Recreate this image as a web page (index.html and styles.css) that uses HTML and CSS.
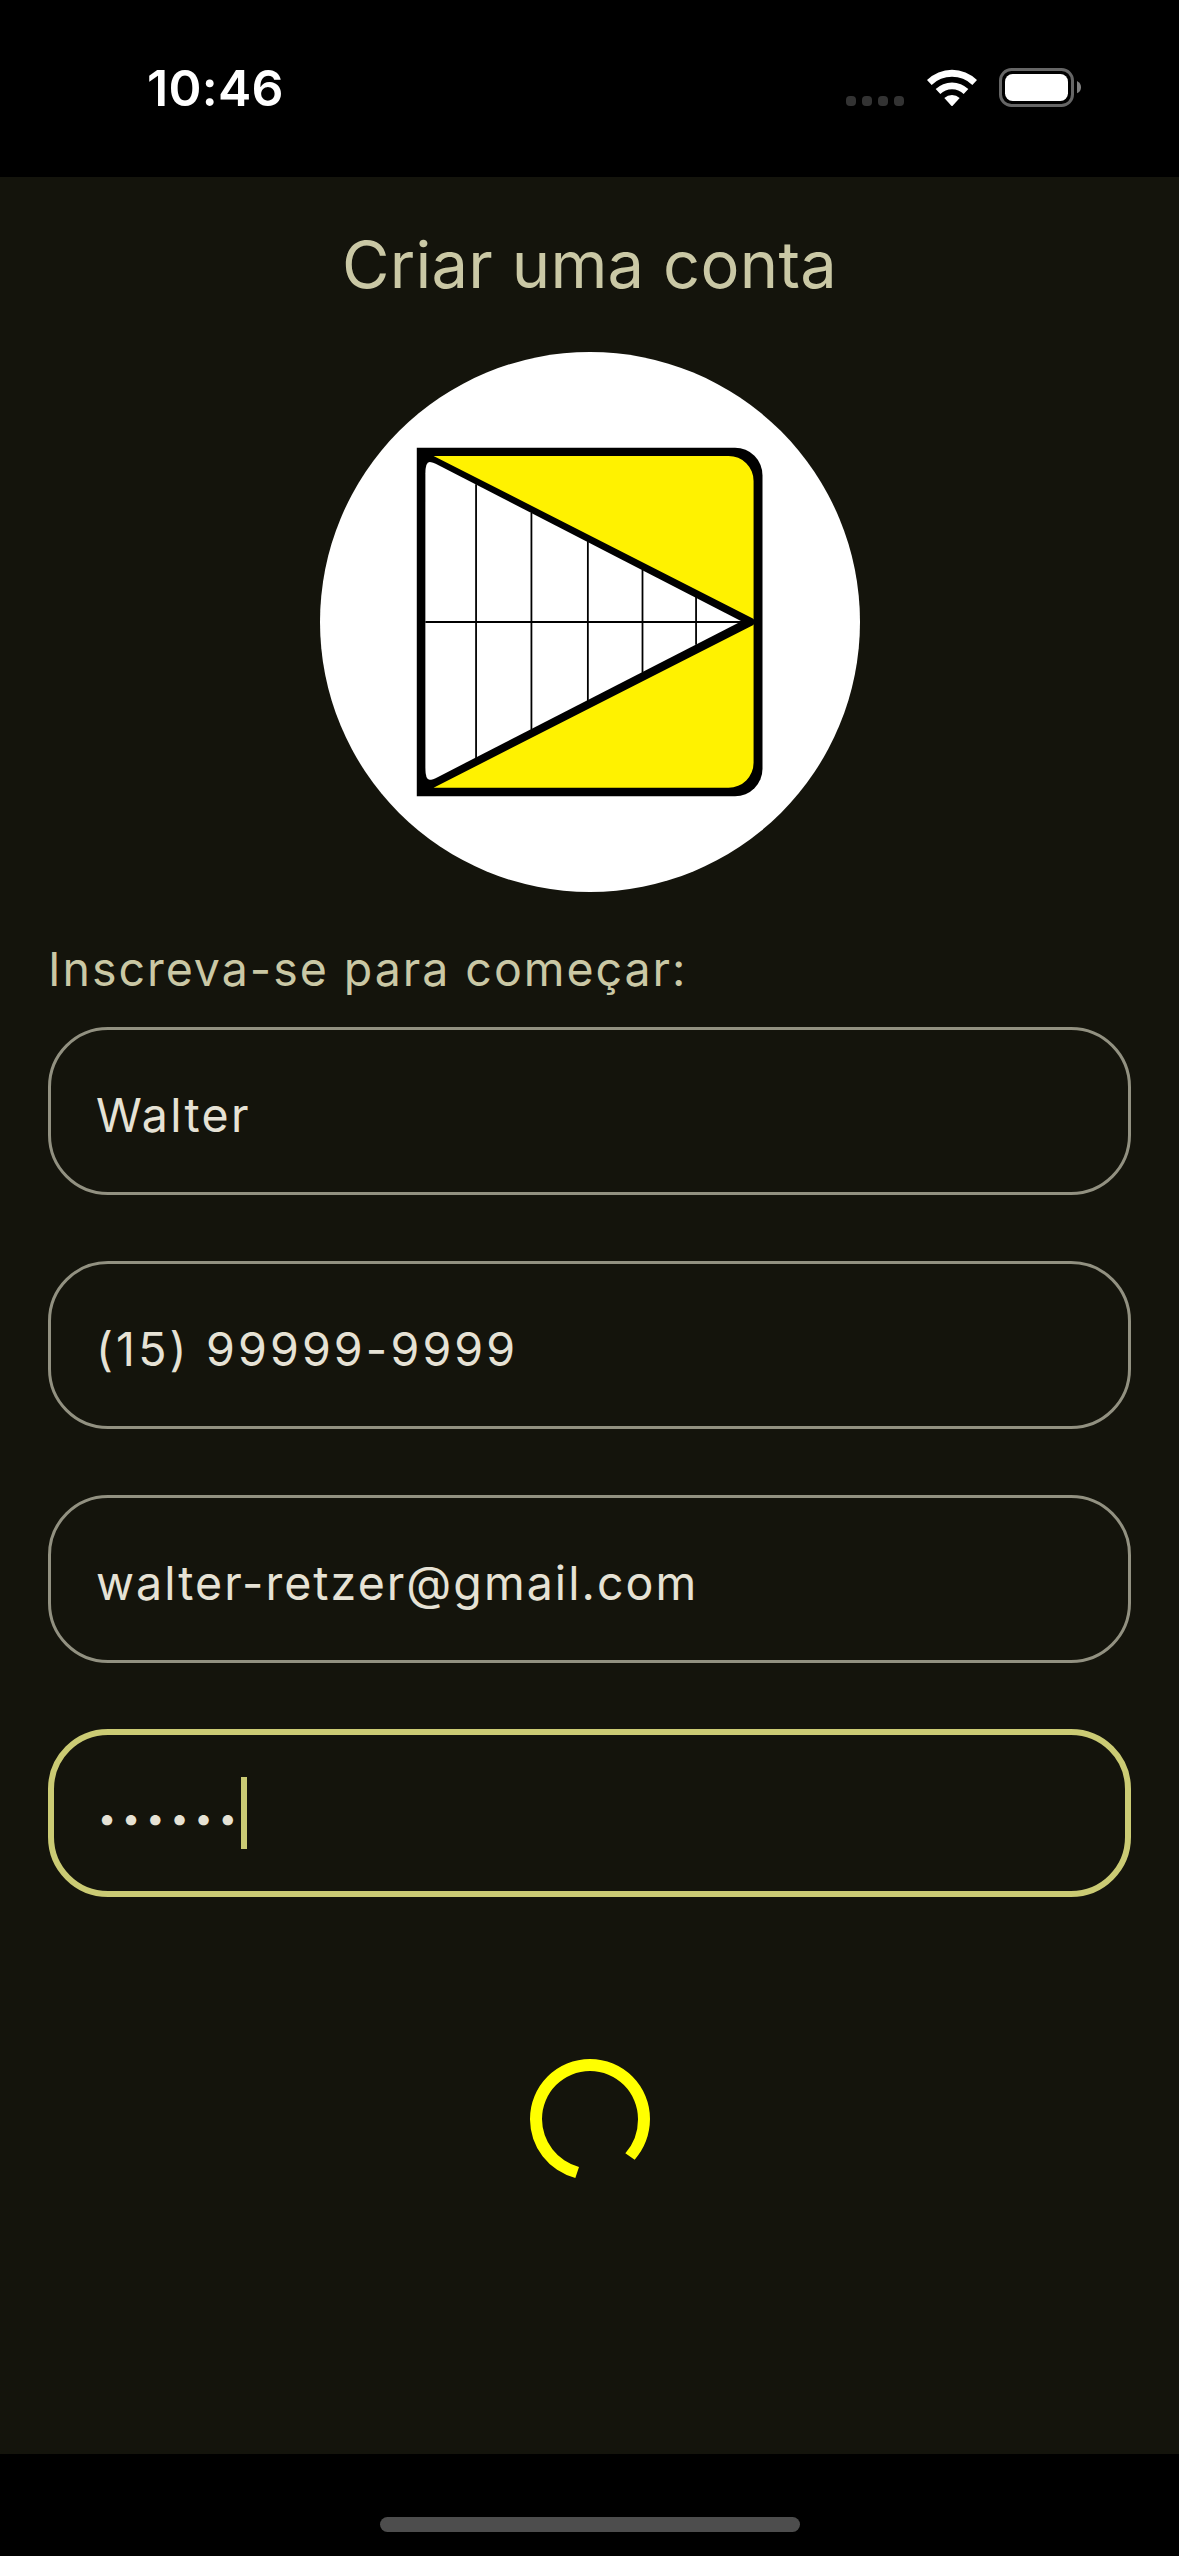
FILE: index.html
```html
<!DOCTYPE html>
<html lang="pt-BR">
<head>
<meta charset="utf-8">
<title>Criar uma conta</title>
<link rel="stylesheet" href="styles.css">
</head>
<body>
<div class="screen">
  <header class="status-bar">
    <span class="clock">10:46</span>
    <div class="indicators">
      <div class="signal"><i class="dot"></i><i class="dot"></i><i class="dot"></i><i class="dot"></i></div>
      <svg class="wifi" viewBox="0 0 150 112" aria-hidden="true">
        <path d="M0 33A107 107 0 0 1 150 33L136 47.500A88 88 0 0 0 14 47.500Z"/>
        <path d="M26 60A70 70 0 0 1 124 60L110 75A50 50 0 0 0 40 75Z"/>
        <path d="M52 87A34 34 0 0 1 98 87L77 110Q75 112 73 110Z"/>
      </svg>
      <svg class="battery" viewBox="0 0 246 117" aria-hidden="true">
        <rect class="battery-shell" x="4.500" y="4.500" width="216" height="108" rx="33"/>
        <rect class="battery-level" x="18" y="18" width="189" height="81" rx="23"/>
        <path class="battery-cap" d="M234 39Q246 45 246 57.500Q246 70 234 76Z"/>
      </svg>
    </div>
  </header>

  <main class="content">
    <h1 class="title">Criar uma conta</h1>
    <svg class="logo" viewBox="28 34 1512 1512" role="img" aria-label="Logo">
      <circle class="logo-disc" cx="784" cy="790" r="756"/>
      <path d="M299 302H1190A77 77 0 0 1 1267 379V1201A77 77 0 0 1 1190 1278H299Z"/>
      <path class="logo-yellow" d="M346 325H1172A70 70 0 0 1 1242 395V783L1240 780Z"/>
      <path class="logo-yellow" d="M346 1254H1172A70 70 0 0 0 1242 1184V796L1240 799Z"/>
      <path class="logo-white" d="M323 375Q323 342 335 342Q342 342 360 351L1208 788L360 1223Q342 1232 335 1232Q323 1232 323 1199Z"/>
      <path class="logo-grid" d="M323 790H1210M465 404V1172M620 484V1092M778 564V1012M931 644V932M1081 720V854"/>
    </svg>

    <form class="form">
      <p class="form-label">Inscreva-se para começar:</p>
      <div class="fields">
        <div class="field"><span class="value value-name">Walter</span></div>
        <div class="field"><span class="value value-phone">(15) 99999-9999</span></div>
        <div class="field"><span class="value value-email">walter-retzer@gmail.com</span></div>
        <div class="field field-focused"><span class="value value-password">••••••</span><i class="caret"></i></div>
      </div>
    </form>

    <svg class="spinner" viewBox="90 85 360 360" aria-label="Carregando">
      <path d="M226 442A182 182 0 0 1 90 265A180 180 0 0 1 270 85A180 180 0 0 1 450 265A190 190 0 0 1 404 387L376 368A155 155 0 0 0 414 265A144 144 0 0 0 270 121A144 144 0 0 0 126 265A150 150 0 0 0 237 409Z"/>
    </svg>
  </main>

  <footer class="home-area"><div class="home-indicator"></div></footer>
</div>
</body>
</html>
```
FILE: styles.css
```css
* { box-sizing: border-box; }

body {
  margin: 0;
  background: #000;
  font-family: Inter, "Liberation Sans", sans-serif;
}

.screen {
  display: flex;
  flex-direction: column;
  width: 1179px;
  height: 2556px;
  background: #14140c;
}

.status-bar {
  display: flex;
  justify-content: space-between;
  align-items: flex-start;
  height: 177px;
  padding: 68px 98px 0 147px;
  background: #000;
  color: #fff;
}

.clock {
  font-size: 50px;
  line-height: 40px;
  font-weight: 600;
  letter-spacing: 0.3px;
}

.indicators { display: flex; align-items: flex-start; }
.signal { display: flex; gap: 6px; margin: 28px 22.500px 0 0; }
.dot { width: 10px; height: 10px; border-radius: 4px; background: #333; }
.wifi { width: 50px; height: 37.5px; margin: 1px 22.500px 0 0; fill: #fff; }
.battery { width: 82px; height: 39px; }
.battery-shell { fill: none; stroke: #666; stroke-width: 9; }
.battery-level { fill: #fff; }
.battery-cap { fill: #808080; }

.content {
  display: flex;
  flex-direction: column;
  align-items: center;
  height: 2277px;
  padding: 46px 48px 0;
}

.title {
  height: 84px;
  margin: 0 0 45px;
  color: #cac8a5;
  font-size: 65px;
  line-height: 84px;
  font-weight: 400;
  letter-spacing: 0.3px;
  white-space: nowrap;
}

.logo { width: 540px; height: 540px; }
.logo-disc, .logo-white { fill: #fff; }
.logo-yellow { fill: #fff200; }
.logo-grid { fill: none; stroke: #000; stroke-width: 5; }

.form { width: 1083px; margin-top: 41px; }

.form-label {
  height: 72px;
  margin: 0 0 22px;
  color: #cac8a5;
  font-size: 46.500px;
  line-height: 72px;
  letter-spacing: 1.97px;
}

.fields { display: flex; flex-direction: column; gap: 66px; }

.field {
  display: flex;
  align-items: center;
  height: 168px;
  padding: 8px 45px 0;
  border: 3px solid #929181;
  border-radius: 60px;
}

.field-focused { padding: 0 42px; border: 6px solid #cbcb74; }

.value {
  color: #e6e2d5;
  font-size: 46.500px;
  line-height: 72px;
  white-space: nowrap;
}

.value-name { letter-spacing: 2.3px; }
.value-phone { letter-spacing: 3.15px; }
.value-email { letter-spacing: 2.05px; }

.value-password {
  padding: 10px 0 0 1.700px;
  font-size: 33px;
  letter-spacing: 5.6px;
}

.caret { width: 6px; height: 72px; margin-left: -2px; background: #cbcb74; }

.spinner { width: 120px; height: 120px; margin-top: 162px; fill: #ff0; }

.home-area {
  display: flex;
  justify-content: center;
  height: 102px;
  padding-top: 63px;
  background: #000;
}

.home-indicator { width: 420px; height: 15px; border-radius: 8px; background: #4d4d4d; }
```
